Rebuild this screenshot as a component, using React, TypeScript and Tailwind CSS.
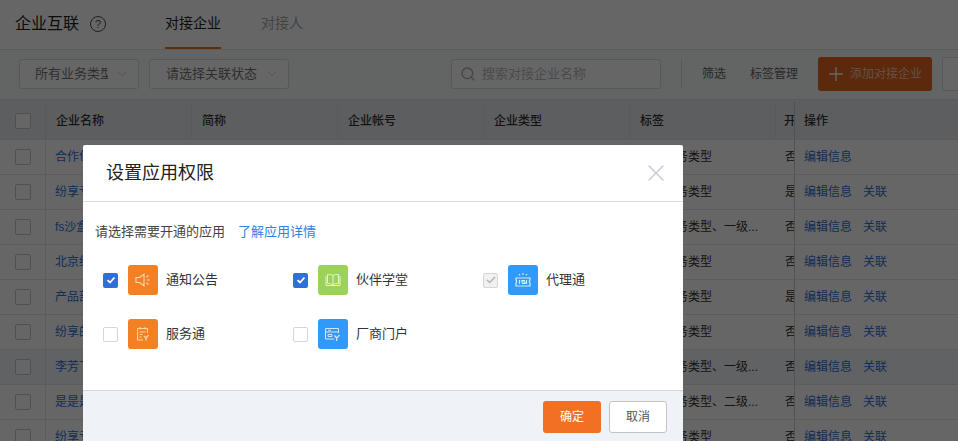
import { ChevronDown, Plus, Search, X } from "lucide-react";

interface Row {
  name: string;
  label: string;
  open: string;
  link: boolean;
  hl?: boolean;
}

const rows: Row[] = [
  { name: "合作伙伴企业", label: "默认业务类型", open: "否", link: false },
  { name: "纷享专属企业", label: "默认业务类型", open: "是", link: true },
  { name: "fs沙盒企业", label: "默认业务类型、一级...", open: "否", link: true },
  { name: "北京纷享企业", label: "默认业务类型", open: "否", link: true },
  { name: "产品部企业", label: "默认业务类型", open: "是", link: true },
  { name: "纷享的企业", label: "默认业务类型", open: "否", link: true },
  { name: "李芳飞企业", label: "默认业务类型、一级...", open: "否", link: true, hl: true },
  { name: "是是是企业", label: "默认业务类型、二级...", open: "否", link: true },
  { name: "纷享专属企业", label: "默认业务类型", open: "否", link: true },
];

function Megaphone() {
  return (
    <svg viewBox="0 0 16 16" className="w-4 h-4" fill="none" stroke="#fbd9b5" strokeWidth="1.100">
      <path d="M1 5.500h3.500L9 2v12l-4.500-3.500H1z" />
      <path d="M11.500 5l2-1.500M12 8h2.500M11.500 11l2 1.500" />
    </svg>
  );
}

function Book() {
  return (
    <svg viewBox="0 0 16 16" className="w-4 h-4" fill="none" stroke="#e6f3cf" strokeWidth="1">
      <path d="M8 3.500C6.500 2.500 4 2.500 2.500 2.500v9c1.500 0 3.500 0 5.500 1 2-1 4-1 5.500-1v-9c-1.500 0-4 0-5.500 1zM8 3.500v9" />
      <path d="M1 4v9.500h14V4" />
    </svg>
  );
}

function Ticket() {
  return (
    <svg viewBox="0 0 18 18" className="w-[18px] h-[18px]" fill="none" stroke="#d8ecff" strokeWidth="1.200">
      <path d="M2 7h14v2a2 2 0 0 0 0 3v3H2v-3a2 2 0 0 0 0-3z" />
      <path d="M11 9.500H8v1.500h3v1.500H8M5.500 9v4M12.500 9v4" />
      <path d="M9 2v2M5 3l1 1.500M13 3l-1 1.500" />
    </svg>
  );
}

function ServiceDoc() {
  return (
    <svg viewBox="0 0 16 16" className="w-4 h-4" fill="none" stroke="#fbd3a6" strokeWidth="1">
      <path d="M8 14H2.500V2.500h10V7" />
      <path d="M5 1v2.500M10 1v2.500M4.500 6h6M4.500 8.500h3M4.500 11h2" />
      <path d="M9 10l2 2 2.500-3M11 12v2.500" strokeWidth="1.300" />
    </svg>
  );
}

function Portal() {
  return (
    <svg viewBox="0 0 18 16" className="w-[18px] h-4" fill="none" stroke="#cfe7ff" strokeWidth="1">
      <path d="M10 13H1.500V2.500h13V7" />
      <path d="M1.500 6h13M4 4.300h3M4 8.500h4v2H4z" />
      <path d="M10.500 9.500l2.200 2.500 2.800-3M12.700 12v3" strokeWidth="1.300" />
    </svg>
  );
}

function Box({ state }: { state: "off" | "on" | "locked" }) {
  if (state === "on") {
    return (
      <span className="w-[15px] h-[15px] shrink-0 rounded-[2px] bg-[#2f6fd9] flex items-center justify-center">
        <svg viewBox="0 0 12 12" className="w-3 h-3" fill="none" stroke="#fff" strokeWidth="1.800">
          <path d="M2.500 6.200l2.500 2.300 4.500-5" />
        </svg>
      </span>
    );
  }
  if (state === "locked") {
    return (
      <span className="w-[15px] h-[15px] shrink-0 rounded-[2px] bg-[#f0f0f0] border border-[#d6d6d6] flex items-center justify-center">
        <svg viewBox="0 0 12 12" className="w-3 h-3" fill="none" stroke="#b5b5b5" strokeWidth="1.600">
          <path d="M2 6l2.700 2.500L10 3" />
        </svg>
      </span>
    );
  }
  return <span className="w-[15px] h-[15px] shrink-0 rounded-[2px] bg-white border border-[#d6d6d6]" />;
}

function AppItem({
  state,
  color,
  icon,
  label,
}: {
  state: "off" | "on" | "locked";
  color: string;
  icon: React.ReactNode;
  label: string;
}) {
  return (
    <div className="flex items-center h-[30px]">
      <Box state={state} />
      <span className={`ml-[10px] w-[30px] h-[30px] rounded-[3px] flex items-center justify-center ${color}`}>
        {icon}
      </span>
      <span className="ml-2 text-[13px] text-[#333]">{label}</span>
    </div>
  );
}

export default function App() {
  return (
    <div
      className="relative h-[441px] w-full overflow-hidden bg-white text-[#333]"
      style={{ fontFamily: '"Liberation Sans", "Noto Sans CJK SC", sans-serif' }}
    >
      {/* Page header */}
      <header className="h-[50px] flex border-b border-[#dfe3e8] bg-white">
        <h1 className="ml-[15px] mt-[14px] text-base leading-5 text-[#222]">企业互联</h1>
        <span className="ml-[11px] mt-4 w-4 h-4 rounded-full border border-[#555] flex items-center justify-center text-[11px] leading-none text-[#555]">
          ?
        </span>
        <nav className="ml-[59px] flex gap-10 text-sm">
          <span className="h-[49px] leading-[47px] border-b-[2px] border-[#f27024] text-[#222]">对接企业</span>
          <span className="h-[49px] leading-[47px] text-[#aaa]">对接人</span>
        </nav>
      </header>

      {/* Toolbar */}
      <div className="h-[49px] flex items-center pl-[19px] pb-px bg-[#f8f9fb] text-[13px] whitespace-nowrap">
        <div className="w-[120px] h-[30px] shrink-0 rounded-[3px] border border-[#d8dce2] bg-white flex items-center pl-[15px] pr-[9px] text-[#777]">
          <span className="w-[73px] overflow-hidden">所有业务类型</span>
          <ChevronDown className="ml-auto w-[14px] h-[14px] text-[#aaa]" strokeWidth={1} />
        </div>
        <div className="ml-[10px] w-[140px] h-[30px] shrink-0 rounded-[3px] border border-[#d8dce2] bg-white flex items-center pl-4 pr-[9px] text-[#777]">
          <span>请选择关联状态</span>
          <ChevronDown className="ml-auto w-[14px] h-[14px] text-[#aaa]" strokeWidth={1} />
        </div>
        <div className="ml-[162px] w-[210px] h-[30px] shrink-0 rounded-[3px] border border-[#d8dce2] bg-white flex items-center pl-2 text-[#bbb]">
          <Search className="w-4 h-4 text-[#aaa]" strokeWidth={2} />
          <span className="ml-[6px]">搜索对接企业名称</span>
        </div>
        <span className="ml-5 w-px h-[30px] shrink-0 bg-[#d8dce2]" />
        <span className="ml-5 text-xs text-[#666]">筛选</span>
        <span className="ml-6 text-xs text-[#666]">标签管理</span>
        <button className="ml-5 w-[114px] h-[34px] shrink-0 rounded-[3px] bg-[#e5671f] text-[#f6c9ab] text-xs flex items-center pl-[7px]">
          <Plus className="w-[22px] h-[22px] text-white" strokeWidth={1.500} />
          <span className="ml-[3px]">添加对接企业</span>
        </button>
        <span className="ml-[10px] w-[60px] h-[34px] shrink-0 rounded-[3px] border border-[#d8dce2] bg-white" />
      </div>

      {/* Table */}
      <div className="text-xs whitespace-nowrap">
        <div className="h-[41px] pt-[2px] flex items-center bg-[#e8ebef] border-y border-[#e0e3e8] font-medium text-[#333]">
          <div className="w-[46px] h-full shrink-0 flex items-center justify-center border-r border-[#dde1e6]">
            <span className="w-4 h-4 rounded-[2px] border border-[#c9c9c9] bg-white" />
          </div>
          <div className="w-[146px] h-full shrink-0 flex items-center pl-[10px] border-r border-[#dde1e6]">企业名称</div>
          <div className="w-[146px] h-full shrink-0 flex items-center pl-[10px] border-r border-[#dde1e6]">简称</div>
          <div className="w-[146px] h-full shrink-0 flex items-center pl-[10px] border-r border-[#dde1e6]">企业帐号</div>
          <div className="w-[146px] h-full shrink-0 flex items-center pl-[10px] border-r border-[#dde1e6]">企业类型</div>
          <div className="w-[146px] h-full shrink-0 flex items-center pl-[10px] border-r border-[#dde1e6]">标签</div>
          <div className="w-[18px] h-full shrink-0 flex items-center pl-2 overflow-hidden">开通</div>
          <div className="flex-1 h-full flex items-center pl-[9px] border-l border-[#c9ccd2]">操作</div>
        </div>
        {rows.map((row, i) => (
          <div
            key={i}
            className={`h-[35px] flex items-center border-b border-[#e3e6ec] ${row.hl ? "bg-[#f1f5fb]" : "bg-white"}`}
          >
            <div className="w-[46px] h-full shrink-0 flex items-center justify-center border-r border-[#e3e6ec]">
              <span className="w-4 h-4 rounded-[2px] border border-[#c9c9c9] bg-white" />
            </div>
            <div className="w-[585px] shrink-0 pl-[9px] text-[#2f72d9]">{row.name}</div>
            <div className="w-[146px] shrink-0 pl-[9px]">{row.label}</div>
            <div className="w-[17px] shrink-0 pl-2 overflow-hidden">{row.open}</div>
            <div className="flex-1 h-full flex items-center pl-[9px] border-l border-[#c9ccd2] text-[#2f72d9]">
              <span>编辑信息</span>
              {row.link && <span className="ml-[11px]">关联</span>}
            </div>
          </div>
        ))}
      </div>

      {/* Mask */}
      <div className="absolute inset-0 bg-black/60" />

      {/* Dialog */}
      <div className="absolute left-[83px] top-[145px] w-[600px] rounded-t-[2px] bg-white">
        <div className="h-[57px] flex items-center justify-between pl-[23px] pr-[13px] border-b border-[#dcdcdc]">
          <h2 className="text-lg text-[#222]">设置应用权限</h2>
          <X className="w-[28px] h-[28px] text-[#c5ced9]" strokeWidth={1.400} />
        </div>
        <div className="h-[188px] pt-[20px]">
          <p className="pl-3 text-[13px] leading-5 text-[#444]">
            请选择需要开通的应用
            <span className="ml-[13px] text-[#2f80e8]">了解应用详情</span>
          </p>
          <div className="mt-[23px] pl-5 grid grid-cols-[190px_190px_190px] gap-y-6">
            <AppItem state="on" color="bg-[#f48024]" icon={<Megaphone />} label="通知公告" />
            <AppItem state="on" color="bg-[#9bd25a]" icon={<Book />} label="伙伴学堂" />
            <AppItem state="locked" color="bg-[#3199f9]" icon={<Ticket />} label="代理通" />
            <AppItem state="off" color="bg-[#f48024]" icon={<ServiceDoc />} label="服务通" />
            <AppItem state="off" color="bg-[#3199f9]" icon={<Portal />} label="厂商门户" />
          </div>
        </div>
        <div className="h-[56px] pt-[10px] pr-4 flex justify-end gap-2 border-t border-[#d5d8e0] bg-[#eff2f6] text-xs">
          <button className="w-[58px] h-8 rounded-[3px] bg-[#f27024] text-white">确定</button>
          <button className="w-[58px] h-8 rounded-[3px] border border-[#c4c4c4] bg-white text-[#555]">取消</button>
        </div>
      </div>
    </div>
  );
}
